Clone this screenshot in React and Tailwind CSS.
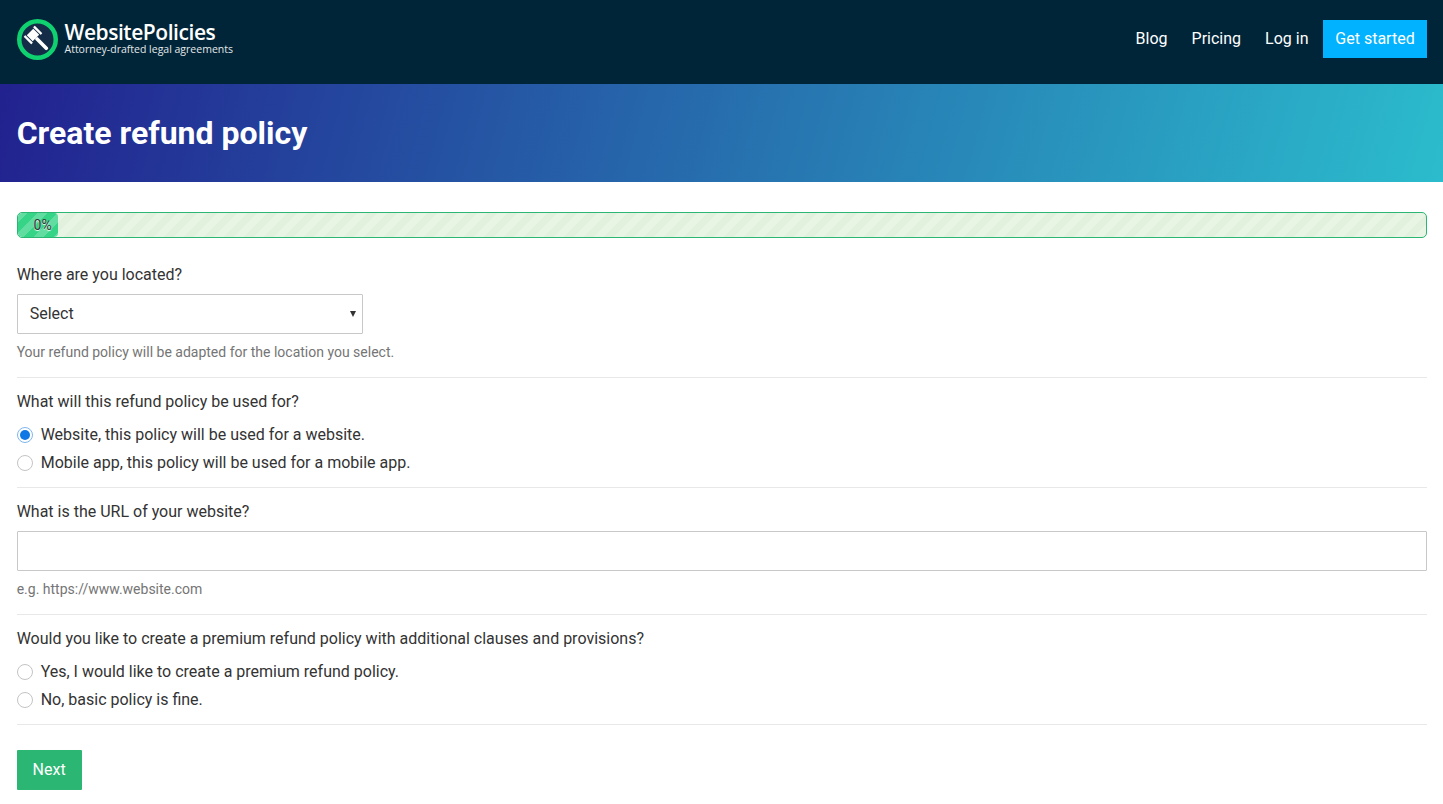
import { useState } from "react";

const roboto = "font-['Roboto',sans-serif]";

function Logo() {
  return (
    <div className="flex items-center">
      <svg width="41" height="41" viewBox="0 0 41 41">
        <circle cx="20.5" cy="20.5" r="18.25" fill="#152c48" stroke="#0fd16f" strokeWidth="4.5" />
        <g fill="#ffffff" transform="translate(16 16) rotate(45)">
          <rect x="4" y="-1.8" width="16.5" height="3.6" rx="1.4" />
          <rect x="-4.2" y="-4.6" width="8.4" height="9.2" />
          <rect x="-5.4" y="-7.9" width="10.8" height="2.4" rx="0.5" />
          <rect x="-5.4" y="5.5" width="10.8" height="2.4" rx="0.5" />
        </g>
      </svg>
      <div className="ml-[7px] mb-[2px] font-['Open_Sans',sans-serif] text-white">
        <div className="text-[21px] leading-[22px] font-semibold tracking-[-0.45px]">WebsitePolicies</div>
        <div className="text-[10.5px] leading-[12px] text-[#e4e8ea]">Attorney-drafted legal agreements</div>
      </div>
    </div>
  );
}

function Radio({ checked, label, onChange }) {
  return (
    <label className="flex items-center h-[28px]">
      <span className={`w-[16px] h-[16px] rounded-full border flex items-center justify-center bg-white ${checked ? "border-[#7fb6ee]" : "border-[#c4c4c4]"}`}>
        {checked && <span className="w-[10px] h-[10px] rounded-full bg-[#0f78e4]" />}
      </span>
      <input type="radio" className="hidden" checked={checked} onChange={onChange} />
      <span className="ml-[8px]">{label}</span>
    </label>
  );
}

export default function App() {
  const [usedFor, setUsedFor] = useState("website");
  const [premium, setPremium] = useState("");

  return (
    <div className={`${roboto} min-h-screen bg-white text-[#333333] text-[16px] leading-[24px]`}>
      <header className="h-[84px] bg-[#002538] flex items-center justify-between pl-[16.5px] pr-[16px] pb-[6px]">
        <Logo />
        <nav className="flex items-center text-white">
          <a className="mr-[24px]">Blog</a>
          <a className="mr-[24px]">Pricing</a>
          <a className="mr-[14.5px]">Log in</a>
          <a className="h-[38px] w-[104px] flex items-center justify-center bg-[#00b2ff]">Get started</a>
        </nav>
      </header>

      <div className="h-[98px] flex items-center px-[16.67px] bg-[linear-gradient(105deg,#22218f_0%,#2bbccd_100%)]">
        <h1 className="text-[32px] font-bold text-white leading-[40px]">Create refund policy</h1>
      </div>

      <main className="pl-[16.67px] pr-[16px] pt-[30px]">
        <div className="h-[26px] rounded-[5px] border border-[#2bb673] bg-[#e2f1dd] bg-[linear-gradient(135deg,rgba(255,255,255,0.2)_25%,transparent_25%,transparent_50%,rgba(255,255,255,0.2)_50%,rgba(255,255,255,0.2)_75%,transparent_75%,transparent)] bg-[length:20px_20px] overflow-hidden">
          <div className="h-full w-[40px] rounded-[4px] bg-[#35d486] bg-[linear-gradient(135deg,rgba(255,255,255,0.22)_25%,transparent_25%,transparent_50%,rgba(255,255,255,0.22)_50%,rgba(255,255,255,0.22)_75%,transparent_75%,transparent)] bg-[length:20px_20px] flex items-center justify-end pr-[6px] text-[14px] text-[#333333] [text-shadow:0_1px_1px_#ffffff]">
            0%
          </div>
        </div>

        <section className="pt-[25px] pb-[15px] border-b border-[#e8e8e8]">
          <div>Where are you located?</div>
          <div className="relative w-[346px] mt-[7px]">
            <select className="w-full h-[40px] appearance-none border border-[#c8c8c8] rounded-[1px] bg-white pl-[12px] text-[#333333]">
              <option>Select</option>
            </select>
            <span className="absolute right-[7px] top-[17px] w-0 h-0 border-l-[3px] border-r-[3px] border-t-[6px] border-l-transparent border-r-transparent border-t-[#333333]" />
          </div>
          <div className="mt-[8px] text-[14px] leading-[20px] text-[#757575]">Your refund policy will be adapted for the location you select.</div>
        </section>

        <section className="pt-[12px] pb-[10px] border-b border-[#e8e8e8]">
          <div className="mb-[7px]">What will this refund policy be used for?</div>
          <Radio checked={usedFor === "website"} onChange={() => setUsedFor("website")} label="Website, this policy will be used for a website." />
          <Radio checked={usedFor === "mobile"} onChange={() => setUsedFor("mobile")} label="Mobile app, this policy will be used for a mobile app." />
        </section>

        <section className="pt-[12px] pb-[15px] border-b border-[#e8e8e8]">
          <div>What is the URL of your website?</div>
          <input type="text" className="block w-full h-[40px] mt-[7px] border border-[#c8c8c8] rounded-[1px] bg-white px-[12px] outline-none" />
          <div className="mt-[8px] text-[14px] leading-[20px] text-[#757575]">e.g. https://www.website.com</div>
        </section>

        <section className="pt-[12px] pb-[10px] border-b border-[#e8e8e8]">
          <div className="mb-[7px]">Would you like to create a premium refund policy with additional clauses and provisions?</div>
          <Radio checked={premium === "yes"} onChange={() => setPremium("yes")} label="Yes, I would like to create a premium refund policy." />
          <Radio checked={premium === "no"} onChange={() => setPremium("no")} label="No, basic policy is fine." />
        </section>

        <button className="mt-[25px] h-[40px] w-[65px] bg-[#2bb673] text-white rounded-[1px]">Next</button>
      </main>
    </div>
  );
}
